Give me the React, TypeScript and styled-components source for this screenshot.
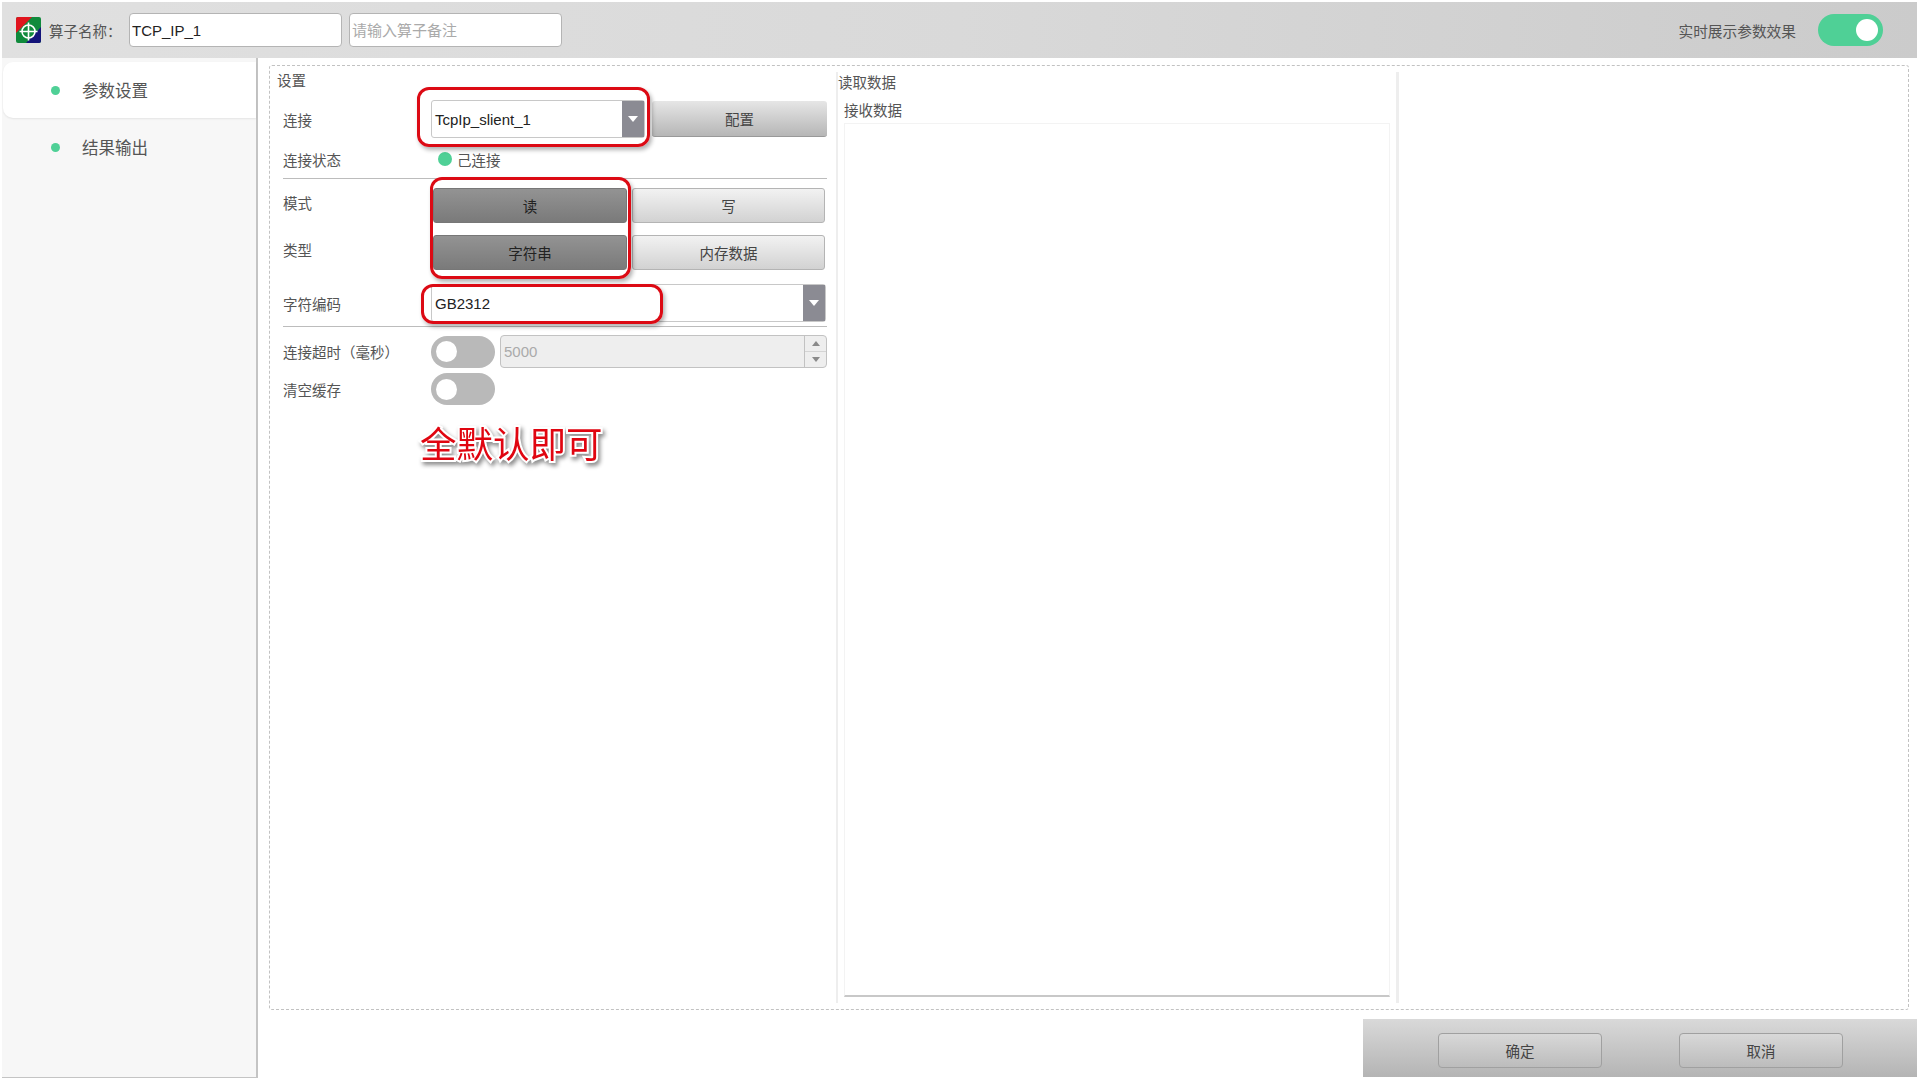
import styled, { createGlobalStyle } from 'styled-components'

const FONT = `"Liberation Sans", "Noto Sans CJK SC", sans-serif`

const GlobalStyle = createGlobalStyle`
  html, body { margin: 0; padding: 0; background: #fff; }
  * { box-sizing: border-box; }
  body { font-family: ${FONT}; color: #555; }
`

const Page = styled.div`
  width: 1920px;
  height: 1080px;
  padding-top: 2px;
  display: flex;
  flex-direction: column;
  overflow: hidden;
  background: #fff;
`

// ─── Top bar ──────────────────────────────────────────────────────────────────

const TopBar = styled.header`
  height: 56px;
  margin: 0 3px 0 2px;
  padding: 0 34px 0 14px;
  display: flex;
  align-items: center;
  background: linear-gradient(90deg, #e0e0e0 0%, #d9d9d9 50%, #cbcbcb 100%);
`

const Logo = styled.svg`
  width: 25px;
  height: 26px;
  flex-shrink: 0;
`

const NameLabel = styled.span`
  margin-left: 8px;
  width: 80px;
  font-size: 14.5px;
  color: #555;
`

const TextInput = styled.input`
  width: 213px;
  height: 34px;
  margin-right: 7px;
  padding: 0 2px;
  border: 1px solid #b4b4b4;
  border-radius: 4px;
  background: #fff;
  font-family: ${FONT};
  font-size: 15px;
  color: #222;
  &::placeholder { color: #aaa; opacity: 1; }
`

const TopSpacer = styled.div`
  flex: 1;
`

const RealtimeLabel = styled.span`
  margin-right: 22px;
  font-size: 14.7px;
  color: #555;
`

const Switch = styled.span<{ $on?: boolean; $w: number; $h: number; $knob: number }>`
  width: ${p => p.$w}px;
  height: ${p => p.$h}px;
  padding: 0 5px;
  border-radius: ${p => p.$h / 2}px;
  display: flex;
  flex-shrink: 0;
  align-items: center;
  justify-content: ${p => (p.$on ? 'flex-end' : 'flex-start')};
  background: ${p => (p.$on ? '#4fd096' : '#b9b9b9')};
  &::after {
    content: '';
    width: ${p => p.$knob}px;
    height: ${p => p.$knob}px;
    border-radius: 50%;
    background: #fff;
  }
`

// ─── Sidebar ──────────────────────────────────────────────────────────────────

const Body = styled.div`
  flex: 1;
  display: flex;
  min-height: 0;
  padding: 0 0 2px 2px;
`

const Sidebar = styled.aside`
  width: 256px;
  flex-shrink: 0;
  padding-top: 4px;
  background: #f7f7f7;
  border-right: 2px solid #c4c4c4;
  border-bottom: 1px solid #c4c4c4;
`

const SideItem = styled.div<{ $active?: boolean }>`
  height: 56px;
  margin-left: 1px;
  margin-bottom: 1px;
  padding-left: 48px;
  display: flex;
  align-items: center;
  gap: 22px;
  font-size: 16.5px;
  color: #555;
  background: ${p => (p.$active ? '#fff' : 'transparent')};
  border-radius: 10px 0 0 10px;
  box-shadow: ${p => (p.$active ? '0 1px 2px rgba(0, 0, 0, 0.08)' : 'none')};
`

const SideDot = styled.span`
  width: 9px;
  height: 9px;
  border-radius: 50%;
  background: #4fd096;
`

// ─── Main panel ───────────────────────────────────────────────────────────────

const Content = styled.main`
  flex: 1;
  min-width: 0;
  display: flex;
  flex-direction: column;
`

const Panel = styled.section`
  position: relative;
  height: 945px;
  margin: 7px 11px 0 11px;
  display: flex;
  border: 1px dashed #c2c2c2;
  border-radius: 3px;
`

const SettingsColumn = styled.div`
  width: 566px;
  flex-shrink: 0;
  padding: 4px 0 0 7px;
`

const GroupTitle = styled.div`
  height: 22px;
  line-height: 22px;
  font-size: 14.5px;
  color: #555;
`

const Row = styled.div<{ $h: number; $top: number }>`
  width: 544px;
  height: ${p => p.$h}px;
  margin: ${p => p.$top}px 0 0 6px;
  display: grid;
  grid-template-columns: 148px 1fr;
  align-items: center;
`

const Label = styled.span<{ $lift?: boolean }>`
  font-size: 14.5px;
  color: #555;
  white-space: nowrap;
  padding-bottom: ${p => (p.$lift ? '7px' : '0')};
`

const Field = styled.div`
  display: flex;
  align-items: center;
  gap: 7px;
  height: 100%;
  min-width: 0;
`

const Select = styled.div<{ $w: number }>`
  width: ${p => p.$w}px;
  height: 100%;
  flex-shrink: 0;
  display: flex;
  align-items: stretch;
  background: #fff;
  border: 1px solid #c8c8c8;
  border-radius: 3px;
`

const SelectValue = styled.span`
  flex: 1;
  padding-left: 3px;
  display: flex;
  align-items: center;
  font-size: 15px;
  color: #222;
`

const SelectArrow = styled.span`
  width: 22px;
  display: flex;
  align-items: center;
  justify-content: center;
  background: #8b8b93;
  &::after {
    content: '';
    border-left: 5px solid transparent;
    border-right: 5px solid transparent;
    border-top: 6px solid #fff;
  }
`

const Button = styled.div`
  flex: 1;
  height: 36px;
  display: flex;
  align-items: center;
  justify-content: center;
  font-size: 14.5px;
  color: #444;
  border-radius: 3px;
  border-bottom: 1px solid #999;
  background: linear-gradient(180deg, #e6e6e6 0%, #b6b6b6 100%);
`

const SegmentGroup = styled.div`
  flex: 1;
  height: 100%;
  margin-left: 2px;
  display: grid;
  grid-template-columns: 194px 193px;
  gap: 5px;
`

const Segment = styled.div<{ $active?: boolean }>`
  display: flex;
  align-items: center;
  justify-content: center;
  font-size: 14.5px;
  color: ${p => (p.$active ? '#222' : '#444')};
  border-radius: 3px;
  border: 1px solid ${p => (p.$active ? '#777' : '#b4b4b4')};
  background: ${p => p.$active
    ? 'linear-gradient(180deg, #939393 0%, #7a7a7a 100%)'
    : 'linear-gradient(180deg, #f2f2f2 0%, #d2d2d2 100%)'};
`

const StatusValue = styled.div`
  display: flex;
  align-items: center;
  gap: 5px;
  padding-left: 7px;
  font-size: 14.5px;
  color: #555;
`

const StatusDot = styled.span`
  width: 14px;
  height: 14px;
  border-radius: 50%;
  background: #4fd096;
`

const Divider = styled.div<{ $top: number }>`
  width: 544px;
  height: 1px;
  margin: ${p => p.$top}px 0 0 6px;
  background: #bcbcbc;
`

const SpinBox = styled.div`
  width: 327px;
  height: 33px;
  margin-left: -2px;
  display: flex;
  align-items: stretch;
  background: #eee;
  border: 1px solid #c2c2c2;
  border-radius: 4px;
`

const SpinValue = styled.span`
  flex: 1;
  padding-left: 3px;
  display: flex;
  align-items: center;
  font-size: 15px;
  color: #aaa;
`

const SpinButtons = styled.div`
  width: 22px;
  display: grid;
  grid-template-rows: 1fr 1fr;
  border-left: 1px solid #c2c2c2;
`

const SpinUp = styled.span`
  display: flex;
  align-items: center;
  justify-content: center;
  border-bottom: 1px solid #d4d4d4;
  &::after {
    content: '';
    border-left: 4px solid transparent;
    border-right: 4px solid transparent;
    border-bottom: 5px solid #8a8a8a;
  }
`

const SpinDown = styled.span`
  display: flex;
  align-items: center;
  justify-content: center;
  &::after {
    content: '';
    border-left: 4px solid transparent;
    border-right: 4px solid transparent;
    border-top: 5px solid #8a8a8a;
  }
`

// ─── Read data column ─────────────────────────────────────────────────────────

const ReadColumn = styled.div`
  width: 563px;
  flex-shrink: 0;
  margin: 6px 0 6px;
  padding: 0 6px 6px 0;
  display: flex;
  flex-direction: column;
  border-left: 2px solid #eee;
  border-right: 3px solid #eee;
`

const SubTitle = styled.div`
  height: 22px;
  line-height: 22px;
  font-size: 14.5px;
  color: #555;
`

const ReceiveLabel = styled(SubTitle)`
  margin: 6px 0 0 6px;
`

const ReceiveBox = styled.div`
  flex: 1;
  margin: 1px 0 0 6px;
  background: #fff;
  border: 1px solid #f3f3f3;
  border-bottom: 2px solid #c8c8c8;
`

// ─── Annotations drawn over the form ──────────────────────────────────────────

const RedMark = styled.div`
  position: absolute;
  border: 3px solid #dc0a14;
  border-radius: 12px;
  box-shadow: 2px 3px 4px rgba(0, 0, 0, 0.3);
  pointer-events: none;
`

const ConnectionMark = styled(RedMark)`
  left: 147px;
  top: 21px;
  width: 233px;
  height: 60px;
`

const ModeMark = styled(RedMark)`
  left: 160px;
  top: 111px;
  width: 201px;
  height: 102px;
`

const EncodingMark = styled(RedMark)`
  left: 151px;
  top: 218px;
  width: 242px;
  height: 40px;
`

const Annotation = styled.div`
  position: absolute;
  left: 150px;
  top: 350px;
  font-family: "Noto Sans CJK SC", sans-serif;
  font-size: 36.5px;
  line-height: 54px;
  color: #e00510;
  -webkit-text-stroke: 4px #fff;
  paint-order: stroke fill;
  filter: drop-shadow(2px 3px 2px rgba(0, 0, 0, 0.45));
`

// ─── Footer ───────────────────────────────────────────────────────────────────

const Footer = styled.footer`
  height: 58px;
  margin-top: 9px;
  display: flex;
  justify-content: flex-end;
`

const FooterActions = styled.div`
  width: 554px;
  margin-right: 3px;
  padding: 14px 74px 0 75px;
  display: flex;
  justify-content: space-between;
  background: linear-gradient(180deg, #d9d9d9 0%, #b4b4b4 100%);
`

const FooterButton = styled.div`
  width: 164px;
  height: 35px;
  display: flex;
  align-items: center;
  justify-content: center;
  font-size: 14.5px;
  color: #444;
  border: 1px solid #a0a0a0;
  border-radius: 4px;
  background: linear-gradient(180deg, #d8d8d8 0%, #bcbcbc 100%);
`

function AppLogo() {
  return (
    <Logo viewBox="0 0 25 26">
      <rect width="25" height="26" rx="2" fill="#108a3c" />
      <path d="M2 0H16L0 16V2a2 2 0 0 1 2-2z" fill="#e0141e" />
      <path d="M25 10V24a2 2 0 0 1-2 2H10z" fill="#14147a" />
      <circle cx="12.5" cy="14.5" r="6.5" fill="none" stroke="#fff" strokeWidth="1.6" />
      <path d="M12.5 5.5V23.5M3.5 14.5H21.5" stroke="#fff" strokeWidth="1.6" />
    </Logo>
  )
}

export default function App() {
  return (
    <>
      <GlobalStyle />
      <Page>
        <TopBar>
          <AppLogo />
          <NameLabel>算子名称：</NameLabel>
          <TextInput readOnly value="TCP_IP_1" />
          <TextInput readOnly placeholder="请输入算子备注" />
          <TopSpacer />
          <RealtimeLabel>实时展示参数效果</RealtimeLabel>
          <Switch $on $w={65} $h={32} $knob={22} />
        </TopBar>

        <Body>
          <Sidebar>
            <SideItem $active><SideDot />参数设置</SideItem>
            <SideItem><SideDot />结果输出</SideItem>
          </Sidebar>

          <Content>
            <Panel>
              <SettingsColumn>
                <GroupTitle>设置</GroupTitle>

                <Row $h={38} $top={8}>
                  <Label>连接</Label>
                  <Field>
                    <Select $w={214}>
                      <SelectValue>TcpIp_slient_1</SelectValue>
                      <SelectArrow />
                    </Select>
                    <Button>配置</Button>
                  </Field>
                </Row>

                <Row $h={24} $top={9}>
                  <Label>连接状态</Label>
                  <StatusValue><StatusDot />己连接</StatusValue>
                </Row>

                <Divider $top={7} />

                <Row $h={35} $top={9}>
                  <Label $lift>模式</Label>
                  <SegmentGroup>
                    <Segment $active>读</Segment>
                    <Segment>写</Segment>
                  </SegmentGroup>
                </Row>

                <Row $h={35} $top={12}>
                  <Label $lift>类型</Label>
                  <SegmentGroup>
                    <Segment $active>字符串</Segment>
                    <Segment>内存数据</Segment>
                  </SegmentGroup>
                </Row>

                <Row $h={38} $top={14}>
                  <Label>字符编码</Label>
                  <Select $w={395}>
                    <SelectValue>GB2312</SelectValue>
                    <SelectArrow />
                  </Select>
                </Row>

                <Divider $top={4} />

                <Row $h={33} $top={8}>
                  <Label>连接超时（毫秒）</Label>
                  <Field>
                    <Switch $w={64} $h={32} $knob={21} />
                    <SpinBox>
                      <SpinValue>5000</SpinValue>
                      <SpinButtons>
                        <SpinUp />
                        <SpinDown />
                      </SpinButtons>
                    </SpinBox>
                  </Field>
                </Row>

                <Row $h={32} $top={5}>
                  <Label>清空缓存</Label>
                  <Switch $w={64} $h={32} $knob={21} />
                </Row>
              </SettingsColumn>

              <ReadColumn>
                <SubTitle>读取数据</SubTitle>
                <ReceiveLabel>接收数据</ReceiveLabel>
                <ReceiveBox />
              </ReadColumn>

              <ConnectionMark />
              <ModeMark />
              <EncodingMark />
              <Annotation>全默认即可</Annotation>
            </Panel>

            <Footer>
              <FooterActions>
                <FooterButton>确定</FooterButton>
                <FooterButton>取消</FooterButton>
              </FooterActions>
            </Footer>
          </Content>
        </Body>
      </Page>
    </>
  )
}
